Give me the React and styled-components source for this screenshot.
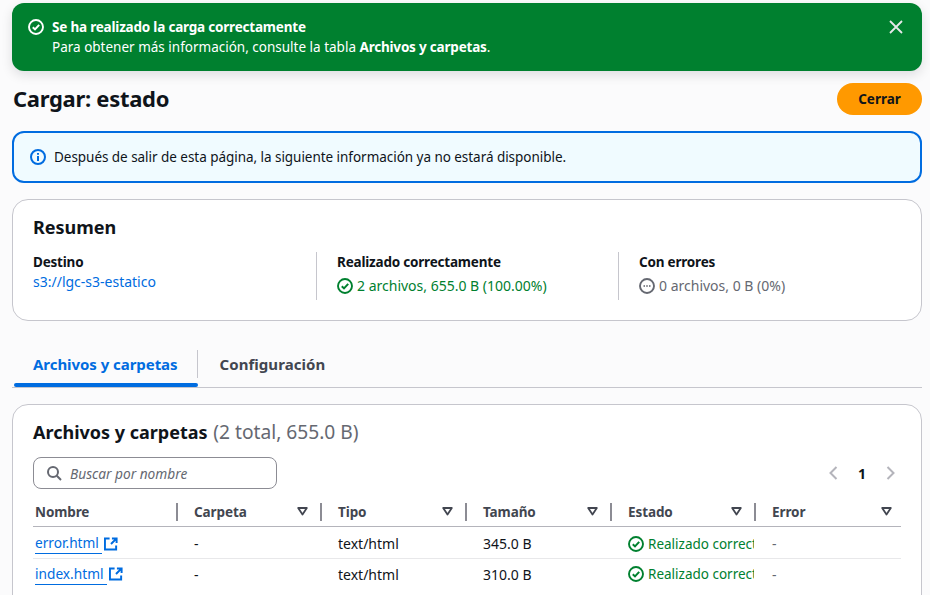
import React from 'react'
import styled, { createGlobalStyle } from 'styled-components'

const font = '"Noto Sans", "Open Sans", sans-serif'

const GlobalStyle = createGlobalStyle`
  html, body {
    margin: 0;
    height: 595px;
    overflow: hidden;
    background: #fbfbfc;
    font-family: ${font};
    font-size: 14px;
    color: #0f141a;
  }
`

function CheckIcon({ size = 16, color = 'currentColor' }) {
  return (
    <Glyph width={size} height={size} viewBox="0 0 16 16" fill="none" stroke={color} strokeWidth="1.9">
      <circle cx="8" cy="8" r="7" />
      <path d="M4.8 8.2l2.2 2.2 4.2-4.6" strokeWidth="2" />
    </Glyph>
  )
}

function ExternalIcon() {
  return (
    <Glyph width="14" height="14" viewBox="0 0 15 15" fill="none" stroke="#006ce0" strokeWidth="2.1">
      <path d="M6 1.5H1v12h12V9" />
      <path d="M8.5 1.5h5v5M13.5 1.5L7.5 7.5" />
    </Glyph>
  )
}

function FilterCaret() {
  return (
    <Glyph width="11" height="9" viewBox="0 0 11 9" fill="none" stroke="#424650" strokeWidth="1.8">
      <path d="M1.2 1h8.6L5.5 7.6z" strokeLinejoin="round" />
    </Glyph>
  )
}

const columns = [
  { title: 'Nombre', width: 145, sortable: false },
  { title: 'Carpeta', width: 144, sortable: true },
  { title: 'Tipo', width: 145, sortable: true },
  { title: 'Tamaño', width: 145, sortable: true },
  { title: 'Estado', width: 144, sortable: true },
  { title: 'Error', width: 145, sortable: true },
]

const files = [
  { name: 'error.html', size: '345.0 B' },
  { name: 'index.html', size: '310.0 B' },
]

export default function App() {
  return (
    <Page>
      <GlobalStyle />
      <Flash>
        <FlashIcon><CheckIcon size={16} color="#fff" /></FlashIcon>
        <FlashText>
          <strong>Se ha realizado la carga correctamente</strong>
          <div>Para obtener más información, consulte la tabla <strong>Archivos y carpetas</strong>.</div>
        </FlashText>
        <Dismiss viewBox="0 0 16 16" width="16" height="16">
          <path d="M2 2l12 12M14 2L2 14" />
        </Dismiss>
      </Flash>

      <Header>
        <Title>Cargar: estado</Title>
        <PrimaryButton>Cerrar</PrimaryButton>
      </Header>

      <InfoAlert>
        <Glyph width="16" height="16" viewBox="0 0 16 16" fill="none" stroke="#006ce0" strokeWidth="2">
          <circle cx="8" cy="8" r="7" />
          <path d="M8 7v5M8 4v1.8" />
        </Glyph>
        Después de salir de esta página, la siguiente información ya no estará disponible.
      </InfoAlert>

      <SummaryCard>
        <CardTitle>Resumen</CardTitle>
        <SummaryGrid>
          <SummaryCol>
            <Label>Destino</Label>
            <BucketLink>s3://lgc-s3-estatico</BucketLink>
          </SummaryCol>
          <SummaryCol>
            <Label>Realizado correctamente</Label>
            <StatusLine $color="#00802f">
              <CheckIcon color="#00802f" />
              2 archivos, 655.0 B (100.00%)
            </StatusLine>
          </SummaryCol>
          <SummaryCol>
            <Label>Con errores</Label>
            <StatusLine $color="#656871">
              <Glyph width="16" height="16" viewBox="0 0 16 16" fill="none" stroke="#656871" strokeWidth="1.9">
                <circle cx="8" cy="8" r="7" />
                <path d="M4.6 8h1.2M7.4 8h1.2M10.2 8h1.2" strokeWidth="1.8" />
              </Glyph>
              0 archivos, 0 B (0%)
            </StatusLine>
          </SummaryCol>
        </SummaryGrid>
      </SummaryCard>

      <Tabs>
        <Tab $active>Archivos y carpetas</Tab>
        <Tab>Configuración</Tab>
      </Tabs>

      <TableCard>
        <CardTitle>
          Archivos y carpetas <Count>(2 total, 655.0 B)</Count>
        </CardTitle>
        <Toolbar>
          <SearchBox>
            <Glyph width="16" height="16" viewBox="0 0 16 16" fill="none" stroke="#656871" strokeWidth="2">
              <circle cx="7" cy="7" r="5" />
              <path d="M10.8 10.8L15 15" />
            </Glyph>
            <SearchHint>Buscar por nombre</SearchHint>
          </SearchBox>
          <Pager>
            <Glyph width="10" height="16" viewBox="0 0 10 16" fill="none" stroke="#b4b4bb" strokeWidth="2"><path d="M8.5 2L2.5 8l6 6" /></Glyph>
            <PageNumber>1</PageNumber>
            <Glyph width="10" height="16" viewBox="0 0 10 16" fill="none" stroke="#b4b4bb" strokeWidth="2"><path d="M1.5 2l6 6-6 6" /></Glyph>
          </Pager>
        </Toolbar>
        <Table>
          <thead>
            <tr>
              {columns.map((col) => (
                <HeadCell key={col.title} style={{ width: col.width }}>
                  <HeadInner>
                    {col.title}
                    {col.sortable && <FilterCaret />}
                  </HeadInner>
                </HeadCell>
              ))}
            </tr>
          </thead>
          <tbody>
            {files.map((file) => (
              <Row key={file.name}>
                <Cell>
                  <FileLink><FileName>{file.name}</FileName><ExternalIcon /></FileLink>
                </Cell>
                <Cell>-</Cell>
                <Cell>text/html</Cell>
                <Cell>{file.size}</Cell>
                <StatusCell>
                  <StatusClip>
                    <CheckIcon color="#00802f" />
                    Realizado correctamente
                  </StatusClip>
                </StatusCell>
                <Cell $muted>-</Cell>
              </Row>
            ))}
          </tbody>
        </Table>
      </TableCard>
    </Page>
  )
}

const Glyph = styled.svg`
  flex-shrink: 0;
  display: block;
`

const Page = styled.div`
  box-sizing: border-box;
  width: 930px;
  height: 595px;
  padding: 3px 8px 0 12px;
  overflow: hidden;
`

const Flash = styled.div`
  display: flex;
  align-items: flex-start;
  box-sizing: border-box;
  height: 68px;
  padding: 14px 18px 0 16px;
  border-radius: 12px;
  background: #00802f;
  color: #fff;
  box-shadow: 0 4px 12px rgba(0, 7, 22, 0.12);
  line-height: 20px;
`

const FlashIcon = styled.div`
  height: 20px;
  display: flex;
  align-items: center;
  margin-right: 8px;
`

const FlashText = styled.div`
  flex: 1;
  font-size: 13.5px;
  strong {
    font-weight: 700;
    letter-spacing: -0.2px;
  }
`

const Dismiss = styled.svg`
  margin-top: 2px;
  fill: none;
  stroke: #e6e8ea;
  stroke-width: 1.8;
`

const Header = styled.div`
  display: flex;
  justify-content: space-between;
  align-items: center;
  margin-top: 12px;
  height: 32px;
`

const Title = styled.h1`
  margin: 0 0 2px 1px;
  font-size: 22px;
  line-height: 30px;
  font-weight: 700;
  letter-spacing: -0.3px;
`

const PrimaryButton = styled.button`
  width: 85px;
  height: 32px;
  border: 0;
  border-radius: 16px;
  background: #ff9900;
  color: #0f141a;
  font-family: ${font};
  font-size: 13.5px;
  font-weight: 700;
`

const InfoAlert = styled.div`
  display: flex;
  align-items: center;
  gap: 8px;
  box-sizing: border-box;
  height: 52px;
  margin-top: 16px;
  padding: 0 16px;
  border: 2px solid #006ce0;
  border-radius: 12px;
  background: #f0fbff;
  font-size: 13.5px;
  letter-spacing: -0.04px;
`

const Card = styled.section`
  box-sizing: border-box;
  border: 1px solid #c6c6cd;
  border-radius: 16px;
  background: #fff;
`

const SummaryCard = styled(Card)`
  height: 122px;
  margin-top: 16px;
  padding: 13px 20px 0;
`

const CardTitle = styled.h2`
  margin: 0;
  font-size: 18px;
  line-height: 28px;
  font-weight: 700;
`

const Count = styled.span`
  margin-left: 1px;
  color: #656871;
  font-size: 19.2px;
  font-weight: 400;
`

const SummaryGrid = styled.div`
  display: grid;
  grid-template-columns: 283px 302px 1fr;
  margin-top: 11px;
`

const SummaryCol = styled.div`
  height: 48px;
  padding-left: 20px;
  border-left: 1px solid #c6c6cd;
  &:first-child {
    padding-left: 0;
    border-left: 0;
  }
`

const Label = styled.div`
  font-size: 13.5px;
  font-weight: 700;
  letter-spacing: -0.2px;
  line-height: 20px;
`

const BucketLink = styled.a`
  color: #006ce0;
  line-height: 20px;
`

const StatusLine = styled.div`
  display: flex;
  align-items: center;
  gap: 4px;
  margin-top: 4px;
  line-height: 20px;
  color: ${(p) => p.$color};
`

const Tabs = styled.div`
  display: flex;
  box-sizing: border-box;
  height: 38px;
  margin-top: 29px;
  border-bottom: 1px solid #c6c6cd;
`

const Tab = styled.div`
  position: relative;
  box-sizing: border-box;
  height: 37px;
  padding: 4px 20px 0 ${(p) => (p.$active ? '19px' : '22px')};
  margin-left: ${(p) => (p.$active ? '2px' : '0')};
  line-height: 20px;
  font-size: 15px;
  font-weight: 700;
  letter-spacing: ${(p) => (p.$active ? '-0.05px' : '0.05px')};
  color: ${(p) => (p.$active ? '#006ce0' : '#424650')};
  ${(p) => p.$active && `
    &::before {
      content: '';
      position: absolute;
      right: 0;
      top: 0;
      width: 1px;
      height: 28px;
      background: #c6c6cd;
    }
    &::after {
      content: '';
      position: absolute;
      left: 0;
      right: 0;
      bottom: 0;
      height: 4px;
      border-radius: 2px;
      background: #006ce0;
    }
  `}
`

const TableCard = styled(Card)`
  height: 220px;
  margin-top: 16px;
  padding: 13px 20px 0;
`

const Toolbar = styled.div`
  display: flex;
  justify-content: space-between;
  align-items: center;
  margin-top: 11px;
`

const SearchBox = styled.div`
  display: flex;
  align-items: center;
  gap: 8px;
  box-sizing: border-box;
  width: 244px;
  height: 32px;
  padding: 0 12px;
  border: 1px solid #8c8c94;
  border-radius: 8px;
  background: #fff;
`

const SearchHint = styled.span`
  font-size: 13.7px;
  font-style: italic;
  color: #656871;
`

const Pager = styled.div`
  display: flex;
  align-items: center;
  gap: 20px;
  padding-right: 5px;
`

const PageNumber = styled.span`
  font-weight: 700;
`

const Table = styled.table`
  width: 868px;
  margin-top: 9px;
  border-collapse: collapse;
  table-layout: fixed;
`

const HeadCell = styled.th`
  position: relative;
  box-sizing: border-box;
  height: 28px;
  padding: 0 14px 0 2px;
  border-bottom: 1px solid #b4b4bb;
  color: #424650;
  font-size: 13.5px;
  font-weight: 700;
  letter-spacing: -0.1px;
  text-align: left;
  &:not(:first-child) { padding-left: 16px; }
  &:last-child { padding-right: 9px; }
  &:not(:last-child)::after {
    content: '';
    position: absolute;
    right: 0;
    top: 5px;
    height: 18px;
    width: 2px;
    background: #8c8c94;
  }
`

const HeadInner = styled.div`
  display: flex;
  justify-content: space-between;
  align-items: center;
`

const Row = styled.tr`
  border-bottom: 1px solid #e8e8ea;
  &:first-child td { height: 32px; }
  &:last-child { border-bottom: 0; }
  &:last-child td { padding-top: 1px; }
`

const Cell = styled.td`
  box-sizing: border-box;
  height: 31px;
  padding: 3px 0 0 16px;
  color: ${(p) => (p.$muted ? '#656871' : '#0f141a')};
  &:first-child { padding-left: 2px; }
`

const StatusCell = styled(Cell)`
  padding-right: 2px;
`

const StatusClip = styled.div`
  display: flex;
  align-items: center;
  gap: 4px;
  overflow: hidden;
  white-space: nowrap;
  font-size: 13.5px;
  color: #00802f;
`

const FileLink = styled.a`
  display: inline-flex;
  align-items: center;
  gap: 2px;
  color: #006ce0;
`

const FileName = styled.span`
  box-sizing: border-box;
  height: 21px;
  padding-right: 3px;
  font-size: 13.7px;
  line-height: 20px;
  border-bottom: 1px solid #006ce0;
`
